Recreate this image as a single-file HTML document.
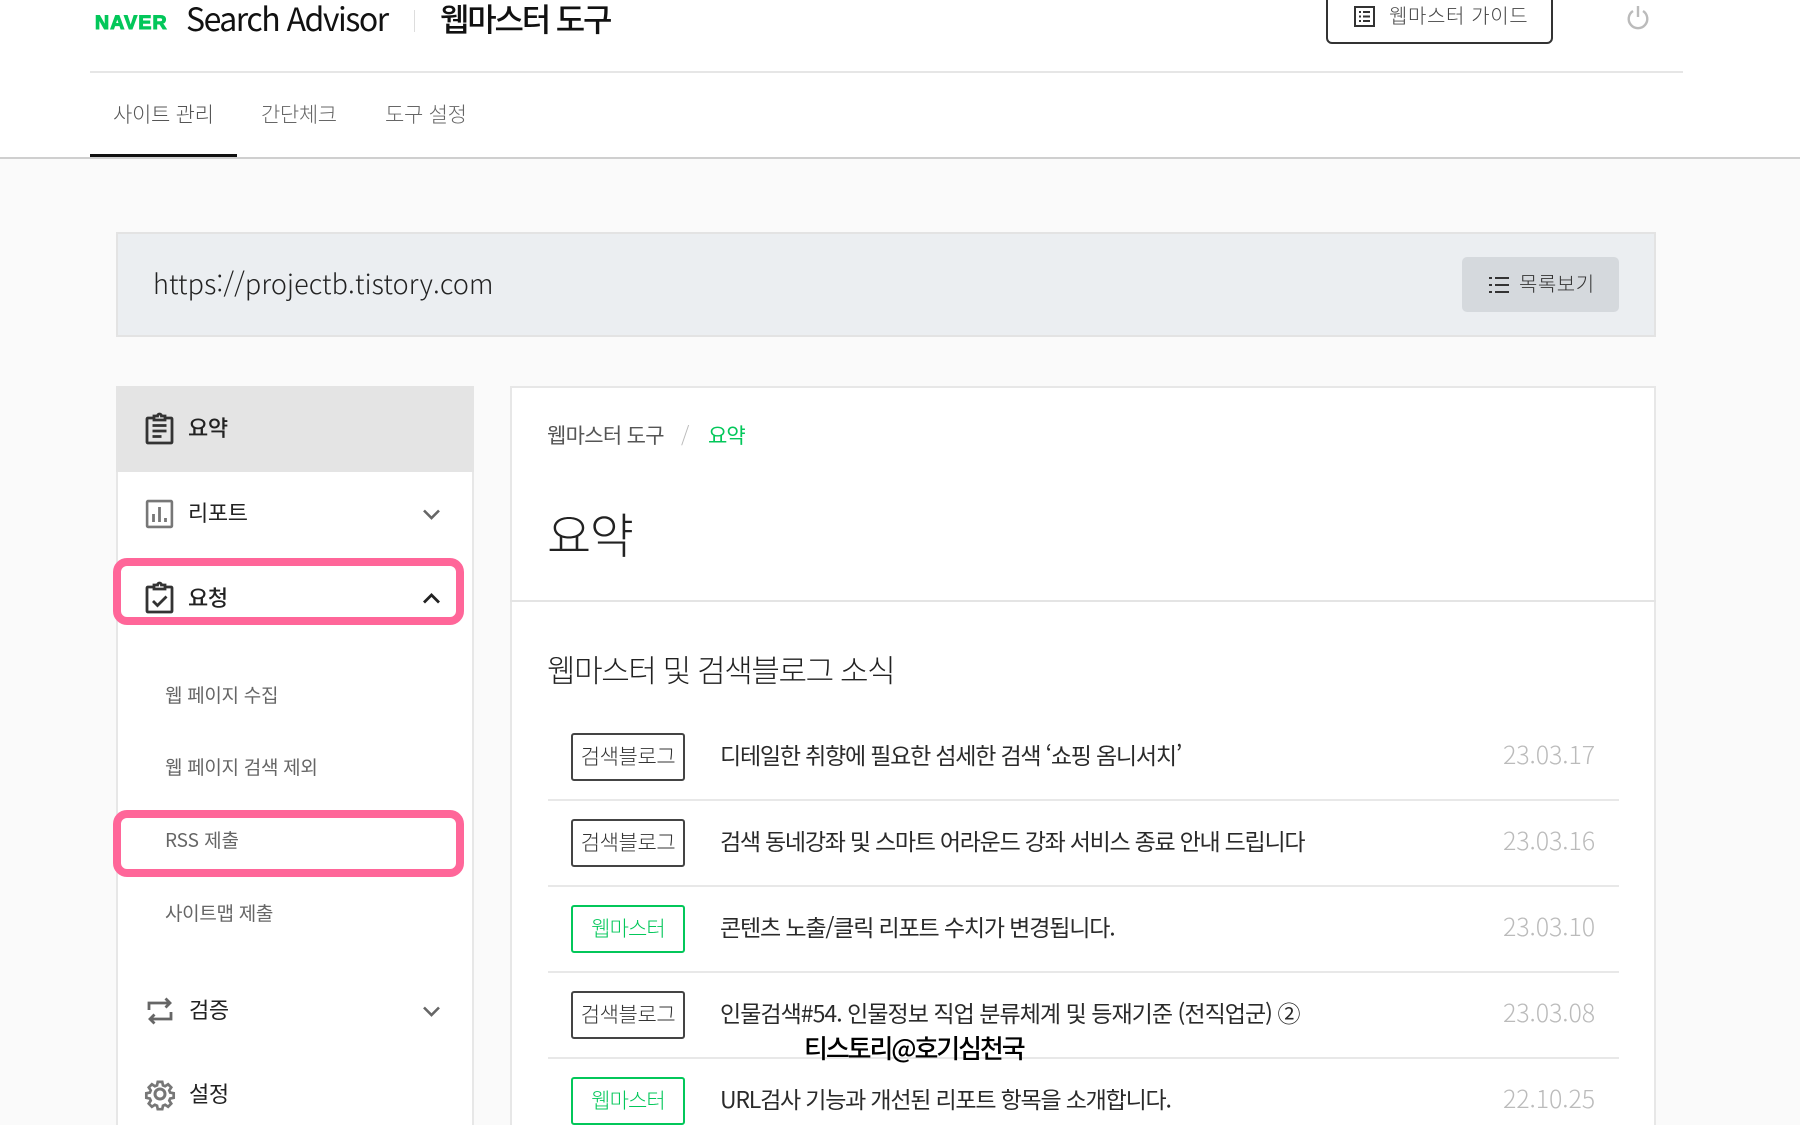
<!DOCTYPE html>
<html lang="ko"><head><meta charset="utf-8"><title>Search Advisor</title>
<style>
html,body{margin:0;padding:0;background:#fafafa}
#p{width:1800px;height:1125px;overflow:hidden;position:relative;background:#fafafa;font-family:"Liberation Sans","Noto Sans CJK KR",sans-serif;}
.t{position:absolute;white-space:nowrap;font-family:"Noto Sans CJK KR","Liberation Sans",sans-serif;line-height:40px;height:40px;}
.b{position:absolute;box-sizing:border-box}
svg{position:absolute;overflow:visible}
.side{font-size:22px;font-weight:500;color:#222;letter-spacing:-.35px}
.sub{font-size:19px;color:#666;letter-spacing:-.3px;font-weight:400}
.badge{position:absolute;left:571px;width:114px;height:48px;box-sizing:border-box;border:2px solid #444;border-radius:3px;background:#fff;font-family:"Noto Sans CJK KR",sans-serif;font-size:21px;line-height:42px;text-align:center;color:#333;letter-spacing:-.4px;white-space:nowrap;font-weight:300}
.badge.g{border-color:#03c75a;color:#03c75a;letter-spacing:-.9px}
.ti{font-size:23px;color:#2a2a2a;letter-spacing:-1.2px;left:720px;font-weight:400}
.d{font-size:25px;color:#bbb;left:1503px;font-weight:300;letter-spacing:-.1px}
.sep{position:absolute;left:548px;width:1071px;height:2px;background:#e8e8e8}
</style></head><body><div id="p">
<div class="b" style="left:0;top:0;width:1800px;height:159px;background:#fff;border-bottom:2px solid #cfcfcf"></div>
<div class="b" style="left:90px;top:71px;width:1593px;height:2px;background:#e6e6e6"></div>
<div class="b" style="left:90px;top:154px;width:147px;height:3px;background:#111"></div>

<div class="t" style="left:95px;top:3px;font-family:'Liberation Sans',sans-serif;font-size:19.5px;font-weight:700;color:#03c75a;letter-spacing:1.2px;-webkit-text-stroke:1.1px #03c75a">NAVER</div>
<div class="t" style="left:186px;top:-2px;font-size:32px;color:#111;letter-spacing:-1.5px;font-weight:400">Search Advisor</div>
<div class="b" style="left:414px;top:10px;width:1px;height:22px;background:#ddd"></div>
<div class="t" style="left:440px;top:-2px;font-size:32px;font-weight:500;color:#111;letter-spacing:-2.2px">웹마스터 도구</div>

<div class="b" style="left:1326px;top:-10px;width:227px;height:54px;border:2px solid #333;border-radius:6px;background:#fff"></div>
<svg style="left:1354px;top:6px" width="21" height="21" viewBox="0 0 21 21" fill="none" stroke="#333" stroke-width="2"><rect x="1" y="1" width="19" height="19"/><path d="M5 6h2M5 10.500h2M5 15h2M9 6h7M9 10.500h7M9 15h7"/></svg>
<div class="t" style="left:1389px;top:-5px;font-size:20px;color:#444;letter-spacing:.6px;font-weight:300">웹마스터 가이드</div>
<svg style="left:1627px;top:6px" width="22" height="22" viewBox="0 0 22 22" fill="none" stroke="#bbb" stroke-width="2.400"><path d="M6 5a9.300 9.300 0 1 0 10 0M11 0v11"/></svg>

<div class="t" style="left:113px;top:94px;font-size:21px;color:#555;letter-spacing:-.3px;font-weight:300">사이트 관리</div>
<div class="t" style="left:261px;top:94px;font-size:21px;color:#666;letter-spacing:-.4px;font-weight:300">간단체크</div>
<div class="t" style="left:385px;top:94px;font-size:21px;color:#666;letter-spacing:-.3px;font-weight:300">도구 설정</div>

<div class="b" style="left:116px;top:232px;width:1540px;height:105px;background:#ebeef1;border:2px solid #e3e3e3"></div>
<div class="t" style="left:153px;top:263px;font-size:27px;color:#222;letter-spacing:.12px;font-weight:300">https://projectb.tistory.com</div>
<div class="b" style="left:1462px;top:257px;width:157px;height:55px;background:#d5d9dd;border-radius:5px"></div>
<svg style="left:1489px;top:275px" width="22" height="20" viewBox="0 0 22 20" fill="none" stroke="#333" stroke-width="2"><path d="M6 3h14M6 10h14M6 17h14M0 3h3M0 10h3M0 17h3"/></svg>
<div class="t" style="left:1519px;top:263px;font-size:20px;color:#333;letter-spacing:.5px;font-weight:300">목록보기</div>

<!-- sidebar -->
<div class="b" style="left:116px;top:386px;width:358px;height:760px;background:#fff;border:2px solid #e7e7e7"></div>
<div class="b" style="left:116px;top:386px;width:358px;height:86px;background:#e4e4e4"></div>

<svg style="left:146px;top:413px" width="27" height="31" viewBox="0 0 27 31" fill="none" stroke="#333" stroke-width="2.800"><path d="M8 5H2a1 1 0 0 0-1 1v23a1 1 0 0 0 1 1h23a1 1 0 0 0 1-1V6a1 1 0 0 0-1-1h-6"/><path d="M8 3h3.500a2 2 0 0 1 4 0H19v4H8zM6.500 12.500h14M6.500 18h14M6.500 23.500h9"/></svg>
<div class="t side" style="left:188px;top:407px">요약</div>

<svg style="left:146px;top:500px" width="27" height="28" viewBox="0 0 27 28" fill="none" stroke="#777" stroke-width="2.600"><rect x="1.100" y="1.100" width="24.800" height="25.800" rx="1"/><path d="M7.500 14v8M13.500 7v15M19.500 18v4" stroke-width="2.800"/></svg>
<div class="t side" style="left:188px;top:492px;font-weight:400;color:#222">리포트</div>
<svg style="left:423px;top:509px" width="17" height="11" viewBox="0 0 17 11" fill="none" stroke="#666" stroke-width="2.600"><path d="M1 1.500l7.500 7.500 7.500-7.500"/></svg>

<svg style="left:146px;top:582px" width="27" height="31" viewBox="0 0 27 31" fill="none" stroke="#333" stroke-width="2.800"><path d="M8 5H2a1 1 0 0 0-1 1v23a1 1 0 0 0 1 1h23a1 1 0 0 0 1-1V6a1 1 0 0 0-1-1h-6"/><path d="M8 3h3.500a2 2 0 0 1 4 0H19v4H8zM7 19l4.500 4.500 9-9"/></svg>
<div class="t side" style="left:188px;top:577px">요청</div>
<svg style="left:423px;top:593px" width="17" height="11" viewBox="0 0 17 11" fill="none" stroke="#222" stroke-width="2.800"><path d="M1 9.500L8.500 2 16 9.500"/></svg>

<div class="t sub" style="left:165px;top:675px">웹 페이지 수집</div>
<div class="t sub" style="left:165px;top:747px">웹 페이지 검색 제외</div>
<div class="t sub" style="left:165px;top:820px;letter-spacing:-.1px">RSS 제출</div>
<div class="t sub" style="left:165px;top:893px">사이트맵 제출</div>

<svg style="left:147px;top:997px" width="26" height="28" viewBox="0 0 26 28" fill="none" stroke="#666" stroke-width="2.800"><path d="M2 13V6h21M18.500 1.500L23 6l-4.500 4.500M24 15v7H3M7.500 17.500L3 22l4.500 4.500"/></svg>
<div class="t side" style="left:189px;top:989px;font-weight:400;color:#222">검증</div>
<svg style="left:423px;top:1006px" width="17" height="11" viewBox="0 0 17 11" fill="none" stroke="#666" stroke-width="2.600"><path d="M1 1.500l7.500 7.500 7.500-7.500"/></svg>

<svg style="left:145px;top:1079px" width="30" height="30" viewBox="0 0 30 30" fill="none" stroke="#777" stroke-width="3"><path d="M12.500 1.500h5l.8 3.900 2.400 1 3.300-2.200 3.500 3.500-2.200 3.300 1 2.400 3.900.8v5l-3.900.8-1 2.400 2.200 3.300-3.500 3.500-3.300-2.200-2.400 1-.8 3.900h-5l-.8-3.900-2.400-1-3.300 2.200-3.500-3.500 2.200-3.300-1-2.400-3.900-.8v-5l3.900-.8 1-2.400-2.200-3.300 3.500-3.500 3.300 2.200 2.400-1z" transform="translate(1.500 1.500) scale(.9)"/><circle cx="15" cy="15" r="5"/></svg>
<div class="t side" style="left:189px;top:1073px;font-weight:400;color:#222">설정</div>

<!-- pink highlights -->
<div class="b" style="left:113px;top:558px;width:351px;height:67px;border:8px solid #ff6699;border-radius:14px"></div>
<div class="b" style="left:113px;top:810px;width:351px;height:67px;border:8px solid #ff6699;border-radius:14px"></div>

<!-- main -->
<div class="b" style="left:510px;top:386px;width:1146px;height:760px;background:#fff;border:2px solid #e7e7e7"></div>
<div class="b" style="left:510px;top:600px;width:1146px;height:2px;background:#e4e4e4"></div>
<div class="t" style="left:547px;top:415px;font-size:21px;color:#555;letter-spacing:-.7px;font-weight:400">웹마스터 도구</div>
<div class="t" style="left:681px;top:415px;font-size:21px;color:#bbb;font-weight:300">/</div>
<div class="t" style="left:708px;top:415px;font-size:21px;color:#03c75a;letter-spacing:-1px;font-weight:400">요약</div>
<div class="t" style="left:547px;top:512px;font-size:48px;color:#222;letter-spacing:-1.5px;font-weight:300">요약</div>
<div class="t" style="left:547px;top:649px;font-size:31px;color:#222;letter-spacing:-1.4px;font-weight:300">웹마스터 및 검색블로그 소식</div>

<div class="badge" style="top:733px">검색블로그</div>
<div class="t ti" style="top:734px">디테일한 취향에 필요한 섬세한 검색 ‘쇼핑 옴니서치’</div>
<div class="t d" style="top:734px">23.03.17</div>
<div class="sep" style="top:799px"></div>

<div class="badge" style="top:819px">검색블로그</div>
<div class="t ti" style="top:820px;letter-spacing:-1.25px">검색 동네강좌 및 스마트 어라운드 강좌 서비스 종료 안내 드립니다</div>
<div class="t d" style="top:820px">23.03.16</div>
<div class="sep" style="top:885px"></div>

<div class="badge g" style="top:905px">웹마스터</div>
<div class="t ti" style="top:906px;letter-spacing:-1.15px">콘텐츠 노출/클릭 리포트 수치가 변경됩니다.</div>
<div class="t d" style="top:906px">23.03.10</div>
<div class="sep" style="top:971px"></div>

<div class="badge" style="top:991px">검색블로그</div>
<div class="t ti" style="top:992px;letter-spacing:-.96px">인물검색#54. 인물정보 직업 분류체계 및 등재기준 (전직업군) ②</div>
<div class="t d" style="top:992px">23.03.08</div>
<div class="sep" style="top:1057px"></div>

<div class="badge g" style="top:1077px">웹마스터</div>
<div class="t ti" style="top:1078px">URL검사 기능과 개선된 리포트 항목을 소개합니다.</div>
<div class="t d" style="top:1078px">22.10.25</div>

<div class="t" style="left:804px;top:1028px;font-size:26px;font-weight:500;color:#000;letter-spacing:-2.1px">티스토리@호기심천국</div>
</div></body></html>
